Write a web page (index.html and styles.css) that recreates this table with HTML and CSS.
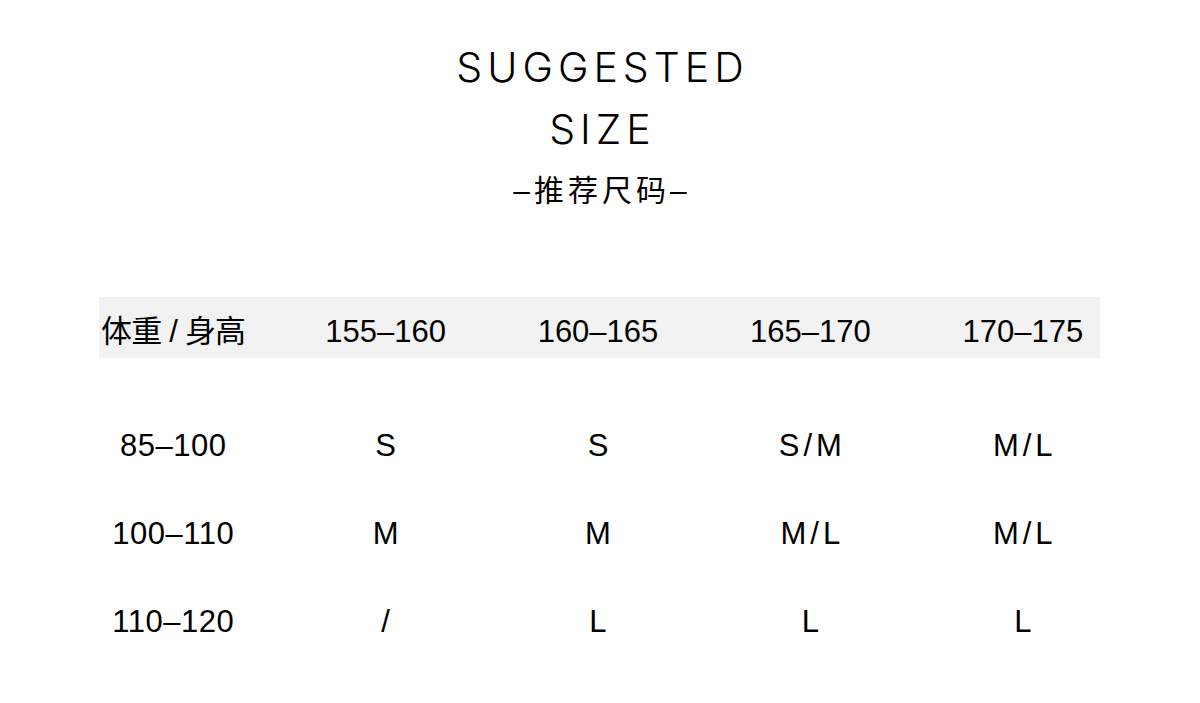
FILE: index.html
```html
<!DOCTYPE html>
<html lang="zh">
<head>
<meta charset="utf-8">
<title>Suggested Size</title>
<link rel="stylesheet" href="styles.css">
</head>
<body>
<div class="page">
  <header class="title">
    <div class="title-en">SUGGESTED</div>
    <div class="title-en">SIZE</div>
    <div class="title-cn"><span class="dash">–</span>推荐尺码<span class="dash">–</span></div>
  </header>
  <section class="table">
    <div class="row head">
      <div class="cell first-col">体重 / 身高</div>
      <div class="cell">155–160</div>
      <div class="cell">160–165</div>
      <div class="cell">165–170</div>
      <div class="cell">170–175</div>
    </div>
    <div class="row body first">
      <div class="cell num">85–100</div>
      <div class="cell sz">S</div>
      <div class="cell sz">S</div>
      <div class="cell sz">S/M</div>
      <div class="cell sz">M/L</div>
    </div>
    <div class="row body">
      <div class="cell num">100–110</div>
      <div class="cell sz">M</div>
      <div class="cell sz">M</div>
      <div class="cell sz">M/L</div>
      <div class="cell sz">M/L</div>
    </div>
    <div class="row body">
      <div class="cell num">110–120</div>
      <div class="cell sz">/</div>
      <div class="cell sz">L</div>
      <div class="cell sz">L</div>
      <div class="cell sz">L</div>
    </div>
  </section>
</div>
</body>
</html>
```

FILE: styles.css
```css
html, body {
  margin: 0;
  padding: 0;
  background: #ffffff;
}
body {
  color: #000;
  font-family: "Liberation Sans", "Noto Sans CJK SC", sans-serif;
}
.page {
  width: 1200px;
  height: 703px;
  overflow: hidden;
}
.title {
  padding-top: 36px;
  text-align: center;
}
.title-en {
  font-family: "Inter", "Liberation Sans", sans-serif;
  font-weight: 300;
  font-size: 41px;
  line-height: 62px;
  letter-spacing: 5px;
  text-indent: 5px;
}
.title-cn {
  font-family: "Noto Sans CJK SC", sans-serif;
  font-weight: 400;
  font-size: 30px;
  line-height: 56px;
  letter-spacing: 4px;
  text-indent: 4px;
}
.dash {
  font-family: "Liberation Sans", sans-serif;
  font-weight: 400;
}
.table {
  margin-top: 78px;
  margin-left: 67px;
  width: 1062px;
}
.row {
  display: grid;
  grid-template-columns: repeat(5, 1fr);
  font-size: 31px;
}
.cell {
  text-align: center;
  white-space: nowrap;
}
.first-col {
  letter-spacing: -0.8px;
}
.head {
  height: 61px;
  box-sizing: border-box;
  padding-top: 9px;
  line-height: 52px;
  background: linear-gradient(#f2f2f2, #f2f2f2) no-repeat;
  background-position: 32px 0;
  background-size: calc(100% - 61px) 100%;
}
.body {
  line-height: 88px;
}
.body.first {
  margin-top: 44px;
}
.num {
  letter-spacing: 0.5px;
}
.sz {
  letter-spacing: 4px;
  text-indent: 4px;
}
```
